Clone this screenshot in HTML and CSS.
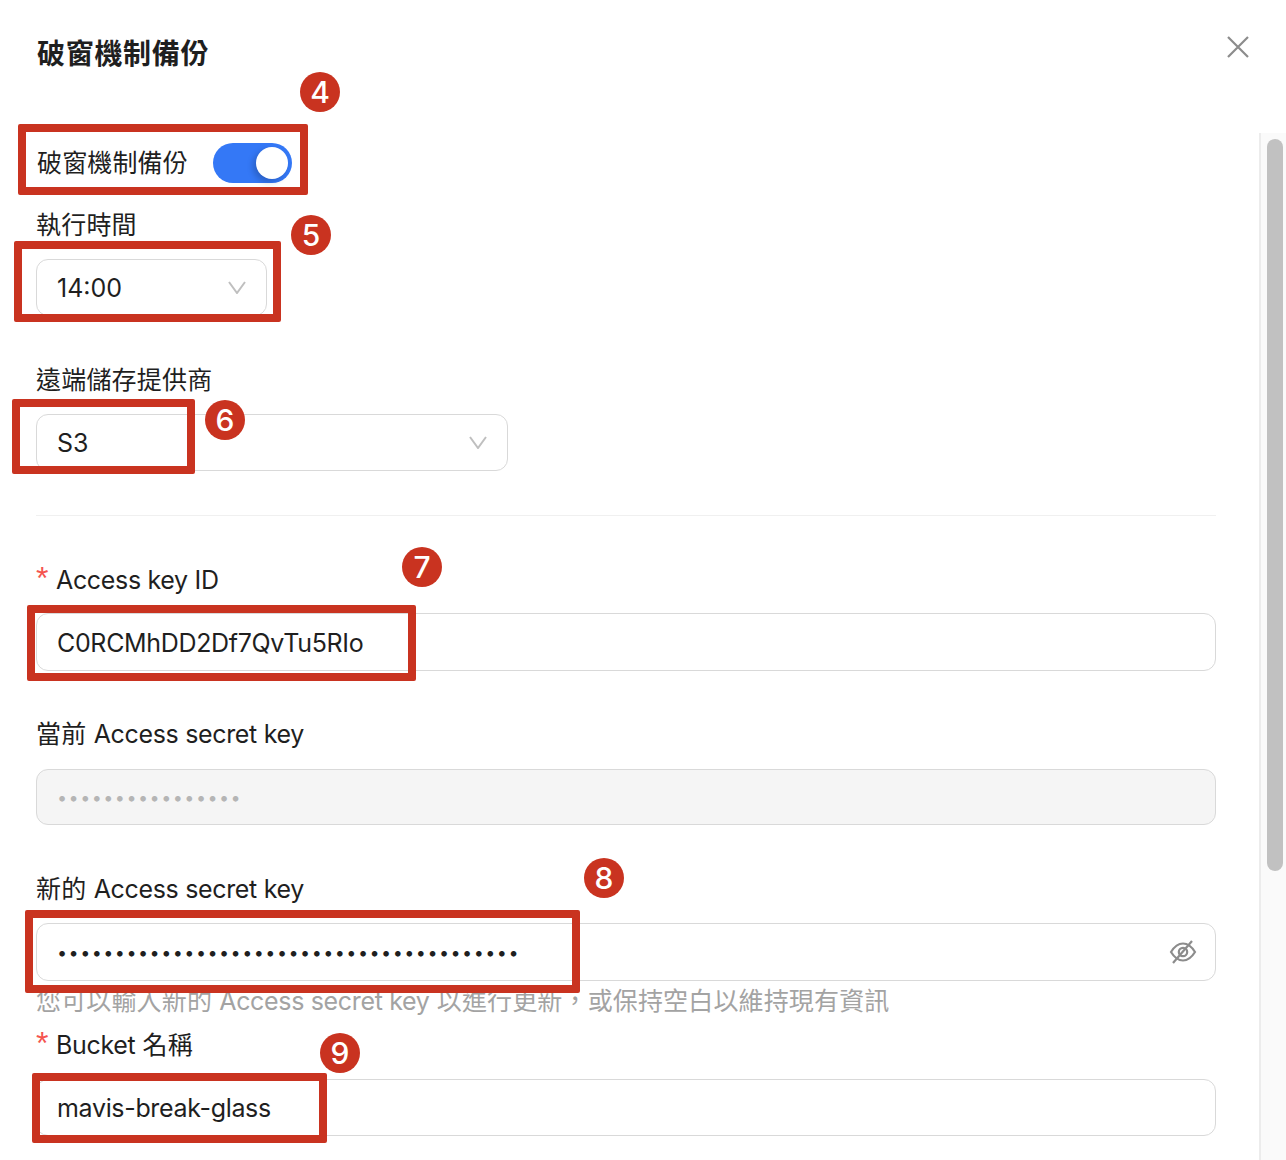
FILE: index.html
```html
<!DOCTYPE html>
<html lang="zh-Hant">
<head>
    <meta charset="UTF-8">
    <meta name="viewport" content="width=device-width, initial-scale=1.0">
    <title>破窗機制備份</title>
    <link rel="stylesheet" href="styles.css">
</head>
<body>
    <div class="modal">
        <div class="modal-header">
            <h1 class="modal-title">破窗機制備份</h1>
            <button class="close-button" aria-label="close">
                <svg width="24" height="24" viewBox="0 0 24 24" fill="none" stroke="#8c8c8c" stroke-width="2.2"><path d="M2 2 L22 22 M22 2 L2 22"/></svg>
            </button>
        </div>

        <div class="modal-body">
            <form class="form">
                <div class="switch-row">
                    <span class="switch-label">破窗機制備份</span>
                    <span class="switch"><span class="switch-knob"></span></span>
                </div>

                <div class="field">
                    <label class="field-label">執行時間</label>
                    <div class="control control-time">
                        <span>14:00</span>
                        <svg class="chevron" width="18" height="13" viewBox="0 0 18 13" fill="none" stroke="#bfbfbf" stroke-width="2"><path d="M1 1 L9 12 L17 1"/></svg>
                    </div>
                </div>

                <div class="field">
                    <label class="field-label">遠端儲存提供商</label>
                    <div class="control control-provider">
                        <span>S3</span>
                        <svg class="chevron" width="18" height="13" viewBox="0 0 18 13" fill="none" stroke="#bfbfbf" stroke-width="2"><path d="M1 1 L9 12 L17 1"/></svg>
                    </div>
                </div>

                <hr class="divider">

                <div class="field field-access">
                    <label class="field-label"><span class="required">*</span><span class="latin">Access key ID</span></label>
                    <div class="control"><input class="control-input latin" type="text" value="C0RCMhDD2Df7QvTu5RIo" readonly></div>
                </div>

                <div class="field field-current">
                    <label class="field-label">當前 <span class="latin">Access secret key</span></label>
                    <div class="control control-disabled"><span class="dots dots-muted">••••••••••••••••</span></div>
                </div>

                <div class="field field-with-hint">
                    <label class="field-label">新的 <span class="latin">Access secret key</span></label>
                    <div class="control">
                        <span class="dots">••••••••••••••••••••••••••••••••••••••••</span>
                        <svg class="eye" width="28" height="26" viewBox="0 0 28 26" fill="none" stroke="#8c8c8c" stroke-width="2.2">
                            <path d="M2 13 C6 6.5 10 4.5 14 4.5 C18 4.5 22 6.5 26 13 C22 19.5 18 21.5 14 21.5 C10 21.5 6 19.5 2 13 Z"/>
                            <circle cx="14" cy="13" r="4.2"/>
                            <path d="M23 2 L4 24"/>
                        </svg>
                    </div>
                    <p class="field-hint">您可以輸入新的 <span class="latin">Access secret key</span> 以進行更新，或保持空白以維持現有資訊</p>
                </div>

                <div class="field">
                    <label class="field-label"><span class="required">*</span><span class="latin">Bucket</span> 名稱</label>
                    <div class="control"><input class="control-input latin" type="text" value="mavis-break-glass" readonly></div>
                </div>
            </form>

            <div class="scroll-track"><div class="scroll-thumb"></div></div>
        </div>
    </div>

    <!-- Annotations on top of the screenshot -->
    <div class="mark mark-4"></div>
    <div class="mark mark-5"></div>
    <div class="mark mark-6"></div>
    <div class="mark mark-7"></div>
    <div class="mark mark-8"></div>
    <div class="mark mark-9"></div>
    <div class="badge badge-4">4</div>
    <div class="badge badge-5">5</div>
    <div class="badge badge-6">6</div>
    <div class="badge badge-7">7</div>
    <div class="badge badge-8">8</div>
    <div class="badge badge-9">9</div>
</body>
</html>
```

FILE: styles.css
```css
/* General Styles */
body {
    font-family: 'Inter', 'Noto Sans CJK TC', sans-serif;
    background-color: #fff;
    color: #1f1f1f;
    margin: 0;
    height: 1160px;
    overflow: hidden;
    position: relative;
}

.latin {
    letter-spacing: -0.33px;
}

.modal-header {
    display: flex;
    justify-content: space-between;
    align-items: flex-start;
    height: 133px;
    box-sizing: border-box;
    padding: 36px 36px 0 37px;
}

.modal-title {
    margin: 0;
    font-size: 28px;
    line-height: 36px;
    font-weight: 700;
    letter-spacing: 0.7px;
}

.close-button {
    background: none;
    border: none;
    padding: 0;
    width: 24px;
    height: 24px;
    margin-top: -1px;
}

.modal-body {
    display: flex;
    height: 1027px;
    overflow: hidden;
}

.form {
    width: 1259px;
    box-sizing: border-box;
    padding: 10px 43px 0 36px;
}

/* Switch */
.switch-row {
    display: flex;
    align-items: center;
    height: 40px;
    margin-bottom: 25px;
    padding-left: 1px;
}

.switch-label {
    font-size: 25px;
    line-height: 36px;
    width: 176px;
    margin-top: -1px;
    letter-spacing: 0.15px;
}

.switch {
    display: flex;
    justify-content: flex-end;
    align-items: center;
    width: 79px;
    height: 40px;
    box-sizing: border-box;
    padding-right: 4px;
    background-color: #3478f6;
    border-radius: 20px;
}

.switch-knob {
    width: 32px;
    height: 32px;
    background-color: #fff;
    border-radius: 50%;
    box-shadow: -3px 3px 6px rgba(0, 0, 0, 0.2);
}

/* Fields */
.field {
    margin-bottom: 47px;
}

.field-with-hint {
    margin-bottom: 11px;
}

.field-label {
    display: block;
    font-size: 25px;
    line-height: 34px;
    margin-bottom: 17px;
    letter-spacing: 0.2px;
}

.required {
    display: inline-block;
    width: 20px;
    font-family: 'Liberation Sans', sans-serif;
    font-size: 32px;
    font-weight: 400;
    line-height: 20px;
    color: #f5544f;
}

.control {
    display: flex;
    justify-content: space-between;
    align-items: center;
    height: 57px;
    box-sizing: border-box;
    padding: 0 20px;
    border: 1px solid #d9d9d9;
    border-radius: 12px;
    font-size: 25px;
    background-color: #fff;
}

.field-with-hint .control,
.field-access .control {
    height: 58px;
}

.field-access {
    margin-bottom: 46px;
}

.field-access .field-label {
    margin-bottom: 16px;
}

.field-access .control-input {
    padding-top: 2px;
}

.field-current .field-label {
    margin-bottom: 18px;
}

.field-current .control {
    height: 56px;
}

.control-time {
    width: 231px;
}

.control-provider {
    width: 472px;
}

.control-disabled {
    background-color: #f5f5f5;
}

.control-input {
    flex: 1;
    min-width: 0;
    border: none;
    outline: none;
    padding: 0;
    background: none;
    font: inherit;
    color: inherit;
}

.dots {
    font-size: 18px;
    letter-spacing: 1.45px;
    color: #1f1f1f;
}

.dots-muted {
    color: #b5b5b5;
}

.eye {
    margin-right: -2px;
}

.field-hint {
    margin: 4px 0 0;
    font-size: 25px;
    line-height: 32px;
    letter-spacing: 0.15px;
    color: #a3a3a3;
}

.divider {
    border: none;
    height: 1px;
    background-color: #f0f0f0;
    margin: -3px 0 47px;
}

/* Scrollbar */
.scroll-track {
    width: 27px;
    box-sizing: border-box;
    background-color: #fafafa;
    border-left: 2px solid #ececec;
    padding: 6px 3px 0 6px;
}

.scroll-thumb {
    width: 16px;
    height: 732px;
    background-color: #c1c1c1;
    border-radius: 8px;
}

/* Annotations */
.mark {
    position: absolute;
    box-sizing: border-box;
    border: 8px solid #c93320;
    border-radius: 2px;
}

.mark-4 { left: 18px; top: 124px; width: 290px; height: 71px; }
.mark-5 { left: 14px; top: 241px; width: 267px; height: 81px; }
.mark-6 { left: 12px; top: 399px; width: 183px; height: 75px; }
.mark-7 { left: 27px; top: 605px; width: 389px; height: 76px; }
.mark-8 { left: 25px; top: 910px; width: 555px; height: 83px; }
.mark-9 { left: 32px; top: 1073px; width: 295px; height: 70px; }

.badge {
    position: absolute;
    width: 40px;
    height: 40px;
    display: flex;
    align-items: center;
    justify-content: center;
    border-radius: 50%;
    background-color: #c93320;
    color: #fff;
    font-size: 30px;
    font-weight: 500;
}

.badge-4 { left: 300px; top: 72px; }
.badge-5 { left: 291px; top: 215px; }
.badge-6 { left: 205px; top: 400px; }
.badge-7 { left: 402px; top: 547px; }
.badge-8 { left: 584px; top: 858px; }
.badge-9 { left: 320px; top: 1033px; }
```
